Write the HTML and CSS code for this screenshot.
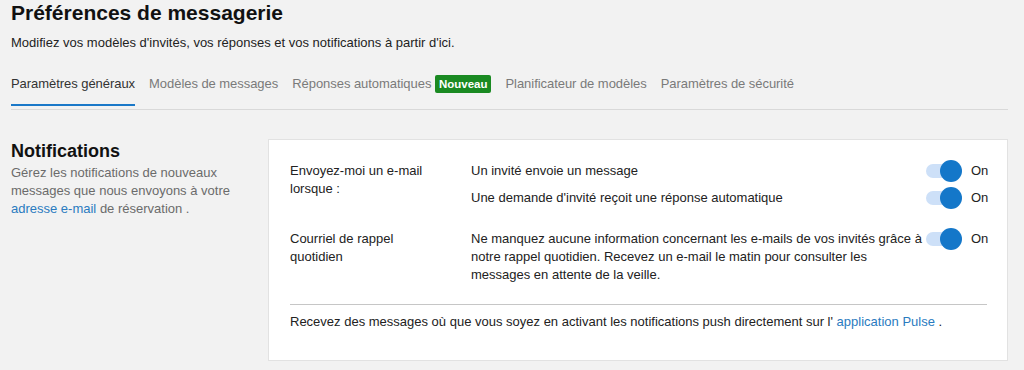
FILE: index.html
```html
<!DOCTYPE html>
<html lang="fr">
<head>
    <meta charset="UTF-8">
    <meta name="viewport" content="width=device-width, initial-scale=1.0">
    <title>Préférences de messagerie</title>
    <link rel="stylesheet" href="styles.css">
</head>
<body>
    <h1>Préférences de messagerie</h1>
    <p class="intro">Modifiez vos modèles d'invités, vos réponses et vos notifications à partir d'ici.</p>

    <nav class="tabs">
        <a class="tab active">Paramètres généraux</a>
        <a class="tab">Modèles de messages</a>
        <a class="tab">Réponses automatiques <span class="badge">Nouveau</span></a>
        <a class="tab">Planificateur de modèles</a>
        <a class="tab">Paramètres de sécurité</a>
    </nav>

    <section class="section">
        <div class="section-info">
            <h2>Notifications</h2>
            <p>Gérez les notifications de nouveaux messages que nous envoyons à votre <a href="#">adresse e-mail</a> de réservation .</p>
        </div>

        <div class="card">
            <div class="setting">
                <div class="setting-label">Envoyez-moi un e-mail lorsque :</div>
                <div class="setting-items">
                    <div class="item">
                        <span class="item-text">Un invité envoie un message</span>
                        <span class="toggle"><span class="knob"></span></span>
                        <span class="state">On</span>
                    </div>
                    <div class="item">
                        <span class="item-text">Une demande d'invité reçoit une réponse automatique</span>
                        <span class="toggle"><span class="knob"></span></span>
                        <span class="state">On</span>
                    </div>
                </div>
            </div>

            <div class="setting">
                <div class="setting-label">Courriel de rappel quotidien</div>
                <div class="setting-items">
                    <div class="item">
                        <span class="item-text">Ne manquez aucune information concernant les e-mails de vos invités grâce à notre rappel quotidien. Recevez un e-mail le matin pour consulter les messages en attente de la veille.</span>
                        <span class="toggle"><span class="knob"></span></span>
                        <span class="state">On</span>
                    </div>
                </div>
            </div>

            <div class="card-footer">
                Recevez des messages où que vous soyez en activant les notifications push directement sur l' <a href="#">application Pulse</a> .
            </div>
        </div>
    </section>
</body>
</html>
```

FILE: styles.css
```css
body {
    font-family: 'Liberation Sans', Arial, sans-serif;
    font-size: 13px;
    line-height: 18px;
    color: #222;
    background: #f2f2f2;
    margin: 0;
    padding: 0 16px 0 11px;
}
a {
    color: #2a7bc0;
    text-decoration: none;
}
h1 {
    font-size: 21px;
    line-height: 26px;
    font-weight: bold;
    color: #111;
    margin: 0;
}
.intro {
    margin: 8px 0 0;
}
.tabs {
    display: flex;
    gap: 14px;
    margin-top: 23px;
    padding-bottom: 3px;
    border-bottom: 1px solid #d9d9d9;
}
.tab {
    color: #7a7a7a;
    padding-bottom: 11px;
    border-bottom: 2px solid transparent;
    white-space: nowrap;
    letter-spacing: -0.05px;
}
.tab.active {
    color: #333;
    border-bottom-color: #1a78c8;
}
.badge {
    display: inline-block;
    background: #1a8a22;
    color: #fff;
    font-size: 11.5px;
    font-weight: bold;
    line-height: 18px;
    padding: 0 4px;
    border-radius: 2px;
    letter-spacing: 0;
}
.section {
    display: flex;
    margin-top: 29px;
}
.section-info {
    width: 257px;
    flex-shrink: 0;
}
.section-info h2 {
    font-size: 18px;
    line-height: 22px;
    margin: 1px 0 0;
    color: #111;
}
.section-info p {
    color: #6b6b6b;
    margin: 2px 0 0;
    width: 240px;
}
.card {
    flex: 1;
    background: #fff;
    border: 1px solid #e2e2e2;
    padding: 20px 20px 29px 21px;
}
.setting {
    display: flex;
    gap: 31px;
}
.setting + .setting {
    margin-top: 19px;
}
.setting-label {
    width: 150px;
    flex-shrink: 0;
    padding-top: 2px;
}
.setting-items {
    flex: 1;
    display: flex;
    flex-direction: column;
    gap: 5px;
}
.item {
    display: flex;
    align-items: flex-start;
}
.item-text {
    flex: 1;
    padding-top: 2px;
}
.toggle {
    position: relative;
    width: 36px;
    height: 22px;
    flex-shrink: 0;
}
.toggle::before {
    content: "";
    position: absolute;
    left: 0;
    right: 4px;
    top: 4px;
    height: 14px;
    border-radius: 7px;
    background: #cde0f8;
}
.knob {
    position: absolute;
    right: 0;
    top: 0;
    width: 22px;
    height: 22px;
    border-radius: 50%;
    background: #1477c9;
}
.state {
    margin-left: 9px;
    padding-top: 2px;
    width: 16px;
}
.card-footer {
    margin-top: 20px;
    border-top: 1px solid #c6c6c6;
    padding-top: 8px;
}
```
